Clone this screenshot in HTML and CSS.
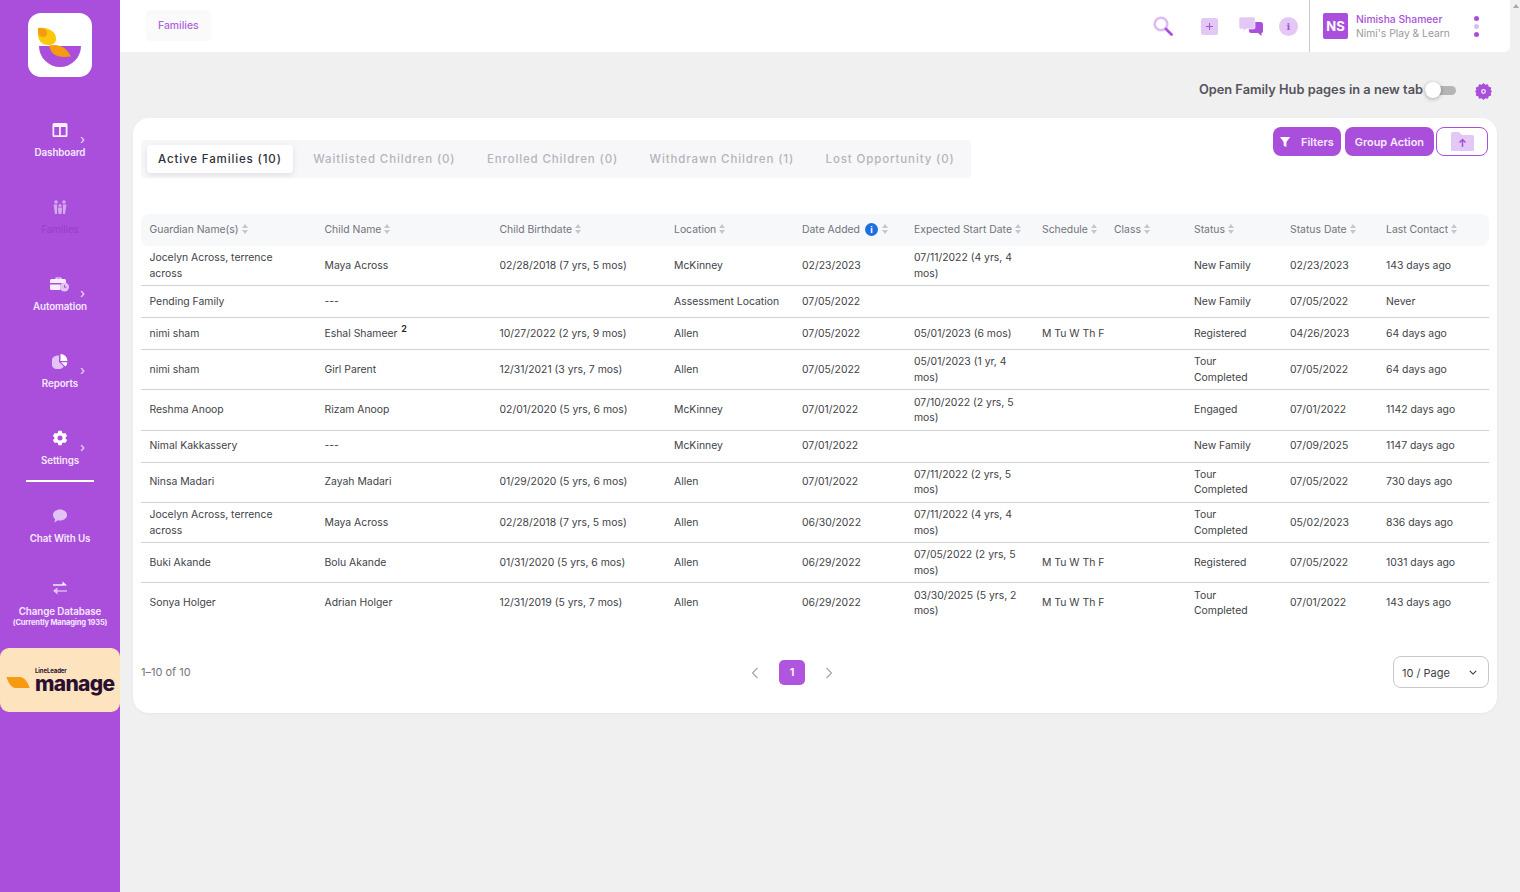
FILE: index.html
```html
<!DOCTYPE html>
<html lang="en">
<head>
<meta charset="utf-8">
<title>Families</title>
<link rel="stylesheet" href="styles.css">
</head>
<body>
<div class="app">
<aside class="sidebar">
  <div class="logo">
    <svg viewBox="0 0 64 64" width="64" height="64"><path d="M11 33h42a21 21 0 0 1-42 0z" fill="#a94fdc"/><path d="M10 15c10-1 18 3 18 11 0 4-3 6-8 6-6 0-9-4-10-9z" fill="#fdc80a"/><path d="M10 15c5-.5 9 1 9 5 0 3-2 4-4 4-3 0-4-2-5-5z" fill="#f59a11"/><path d="M21 32.500c6-1.500 13 0 17 4 2 2 4 5 5 7-8 1-14 .5-18-3-2-2-3-5-4-8z" fill="#f59a11"/></svg>
  </div>
  <nav class="nav">
    <a class="item"><svg class="ic" viewBox="0 0 16 16" width="16" height="16"><path fill="#fff" d="M2 1h12a1.500 1.500 0 0 1 1.500 1.500v11a1.500 1.500 0 0 1-1.500 1.500H2a1.500 1.500 0 0 1-1.500-1.500v-11A1.500 1.500 0 0 1 2 1zm.2 4v8.300h4.900V5zm6.600 0v8.300h4.900V5z" fill-rule="evenodd" opacity=".92"/></svg><span class="lb">Dashboard</span><i class="chev">›</i></a>
    <a class="item item-current"><svg class="ic" viewBox="0 0 16 16" width="16" height="16"><g fill="#e5c6f5" opacity=".75"><circle cx="4" cy="3" r="1.800"/><circle cx="12" cy="3" r="1.800"/><circle cx="8" cy="6.500" r="1.500"/><path d="M1.500 5.500h3.700L5 15H3zM10.800 5.500h3.700L13 15h-2zM6 8.500h4v3l-.6 3.500H6.600L6 11.500z"/></g></svg><span class="lb">Families</span></a>
    <a class="item"><svg class="ic ic-w" viewBox="0 0 20 16" width="20" height="16"><path fill="#fff" opacity=".9" d="M5.500 3V1.500h6V3h3a1.500 1.500 0 0 1 1.500 1.500V7H0V4.500A1.500 1.500 0 0 1 1.500 3zm1.200 0h3.600v-.4H6.700zM0 8.500h10.500v5.500H1.500A1.500 1.500 0 0 1 0 12.500z"/><circle cx="14.500" cy="11" r="4.500" fill="#e3c3f5"/><path d="M14.500 9v2.300h1.800" stroke="#a94fdc" fill="none"/></svg><span class="lb">Automation</span><i class="chev">›</i></a>
    <a class="item"><svg class="ic" viewBox="0 0 16 16" width="16" height="16"><path fill="#e3c3f5" d="M7 2.500V9l4.800 4.500A7 7 0 1 1 7 2.500z"/><path fill="#fff" d="M8.500 1a7 7 0 0 1 7 7h-7z"/><path fill="#fff" d="M9 9.200h6.400a7 7 0 0 1-2 4.300z"/></svg><span class="lb">Reports</span><i class="chev">›</i></a>
    <a class="item item-active"><svg class="ic" viewBox="0 0 16 16" width="16" height="16"><path fill="#fff" fill-rule="evenodd" d="M6.300 .8h3.400l.4 2 1.300.8 2-.7 1.700 3-1.500 1.300v1.600l1.500 1.300-1.700 3-2-.7-1.300.8-.4 2H6.300l-.4-2-1.300-.8-2 .7-1.700-3 1.500-1.300V7.200L.9 5.900l1.700-3 2 .7 1.300-.8zM8 5.500a2.500 2.500 0 1 0 0 5 2.500 2.500 0 0 0 0-5z"/></svg><span class="lb">Settings</span><i class="chev">›</i></a>
    <a class="item item-short"><svg class="ic" viewBox="0 0 16 16" width="16" height="16"><path fill="#e3c3f5" d="M8 1.500c4 0 7 2.400 7 5.500s-3 5.500-7 5.500c-.8 0-1.500-.1-2.200-.3L2.500 14.500l.6-3.500C1.800 10 1 8.600 1 7c0-3.100 3-5.500 7-5.500z"/></svg><span class="lb">Chat With Us</span></a>
    <a class="item item-db"><svg class="ic" viewBox="0 0 16 16" width="16" height="16"><path fill="none" stroke="#fff" stroke-width="1.300" d="M1 5h10"/><path fill="#fff" d="M10.500 1.500 15 5.500h-4.500z"/><path fill="none" stroke="#e3c3f5" stroke-width="1.300" d="M15 11H5"/><path fill="#e3c3f5" d="M5.500 7.500 1 10.700h4.500zM1 10.700l4.500 3.800v-3.800z"/></svg><span class="lb">Change Database</span><span class="lb-sub">(Currently Managing 1935)</span></a>
  </nav>
  <div class="manage">
    <svg viewBox="0 0 26 14" width="25" height="13"><path d="M0 1h14c5 0 9 5 11 12H11C5 13 2 7 0 1z" fill="#f59a11"/></svg>
    <div class="manage-text"><span class="manage-top">LineLeader</span><span class="manage-word">manage</span></div>
  </div>
</aside>
<main class="main">
  <header class="topbar">
    <div class="crumb">Families</div>
    <div class="top-icons">
      <svg class="t-search" viewBox="0 0 20 20" width="20" height="20"><circle cx="8" cy="8" r="6.300" fill="none" stroke="#dcbcf2" stroke-width="2.600"/><path d="M13 13l5.500 5.500" stroke="#a94fdc" stroke-width="2.800" stroke-linecap="round"/></svg>
      <svg class="t-plus" viewBox="0 0 17 17" width="17" height="17"><rect width="17" height="17" rx="2.500" fill="#e3c8f6"/><path d="M8.500 5v7M5 8.500h7" stroke="#a94fdc" stroke-width="1"/></svg>
      <svg class="t-chat" viewBox="0 0 24 19" width="24" height="19"><path d="M9 5h12.500A2.500 2.500 0 0 1 24 7.500V14a2 2 0 0 1-1.500 2v3L19 16h-7a2 2 0 0 1-2-2z" fill="#a94fdc"/><path d="M1.500 0h13A1.500 1.500 0 0 1 16 1.500v9a1.500 1.500 0 0 1-1.500 1.500H7l-2.500 2.500V12h-3A1.500 1.500 0 0 1 0 10.500v-9A1.500 1.500 0 0 1 1.500 0z" fill="#e3c8f6" stroke="#fff" stroke-width=".6"/></svg>
      <div class="t-info">i</div>
    </div>
    <div class="user">
      <div class="avatar">NS</div>
      <div class="user-text"><div class="u-name">Nimisha Shameer</div><div class="u-org">Nimi's Play &amp; Learn</div></div>
      <div class="dots"><i></i><i class="dot-l"></i><i></i></div>
    </div>
  </header>
  <div class="toggle-row">
    <span class="toggle-label">Open Family Hub pages in a new tab</span>
    <span class="toggle"><i></i></span>
    <svg class="gear" viewBox="0 0 16 16" width="17" height="17"><path fill="#a94fdc" fill-rule="evenodd" d="M8 0l1.800 1.700 2.400-.5.800 2.300 2.300.8-.5 2.400L16 8l-1.200 1.300.5 2.400-2.300.8-.8 2.300-2.400-.5L8 16l-1.800-1.700-2.400.5-.8-2.300-2.300-.8.5-2.400L0 8l1.200-1.300-.5-2.400 2.300-.8.8-2.300 2.400.5zm0 5.700a2.300 2.300 0 1 0 0 4.600 2.300 2.300 0 0 0 0-4.600zm0 1.200a1.100 1.100 0 1 1 0 2.200 1.100 1.100 0 0 1 0-2.200z"/></svg>
  </div>
  <section class="card">
    <div class="card-top">
      <div class="tabs">
        <div class="tab tab-on">Active Families (10)</div>
        <div class="tab">Waitlisted Children (0)</div>
        <div class="tab">Enrolled Children (0)</div>
        <div class="tab">Withdrawn Children (1)</div>
        <div class="tab">Lost Opportunity (0)</div>
      </div>
      <div class="actions">
        <button class="btn btn-filter"><svg viewBox="0 0 12 12" width="11" height="12"><path fill="#fff" d="M0 .5h11L7 6v5.500L4 10V6z"/></svg>Filters</button>
        <button class="btn">Group Action</button>
        <button class="btn-out"><svg viewBox="0 0 23 19" width="23" height="19"><path fill="#e3c8f6" d="M0 1.500A1.500 1.500 0 0 1 1.500 0H8l3 3h10.500A1.500 1.500 0 0 1 23 4.500v13a1.500 1.500 0 0 1-1.500 1.500h-20A1.500 1.500 0 0 1 0 17.500z"/><path d="M11.500 15V8M8.500 10.500l3-3 3 3" stroke="#a94fdc" stroke-width="1.500" fill="none"/></svg></button>
      </div>
    </div>
    <table class="tbl">
      <colgroup><col class="c1"><col class="c1"><col class="c1"><col class="c4"><col class="c5"><col class="c4"><col class="c7"><col class="c8"><col class="c9"><col class="c9"><col class="c11"></colgroup>
      <thead><tr>
        <th>Guardian Name(s)<span class="sort"></span></th>
        <th>Child Name<span class="sort"></span></th>
        <th>Child Birthdate<span class="sort"></span></th>
        <th>Location<span class="sort"></span></th>
        <th>Date Added<span class="info-b">i</span><span class="sort"></span></th>
        <th>Expected Start Date<span class="sort"></span></th>
        <th>Schedule<span class="sort"></span></th>
        <th>Class<span class="sort"></span></th>
        <th>Status<span class="sort"></span></th>
        <th>Status Date<span class="sort"></span></th>
        <th>Last Contact<span class="sort"></span></th>
      </tr></thead>
      <tbody>
        <tr class="h40"><td class="gn">Jocelyn Across, terrence across</td><td>Maya Across</td><td>02/28/2018 (7 yrs, 5 mos)</td><td>McKinney</td><td>02/23/2023</td><td>07/11/2022 (4 yrs, 4 mos)</td><td></td><td></td><td>New Family</td><td>02/23/2023</td><td>143 days ago</td></tr>
        <tr class="h32"><td>Pending Family</td><td>---</td><td></td><td>Assessment Location</td><td>07/05/2022</td><td></td><td></td><td></td><td>New Family</td><td>07/05/2022</td><td>Never</td></tr>
        <tr class="h32"><td>nimi sham</td><td>Eshal Shameer <sup class="cnt">2</sup></td><td>10/27/2022 (2 yrs, 9 mos)</td><td>Allen</td><td>07/05/2022</td><td>05/01/2023 (6 mos)</td><td class="nw">M Tu W Th F</td><td></td><td>Registered</td><td>04/26/2023</td><td>64 days ago</td></tr>
        <tr class="h40"><td>nimi sham</td><td>Girl Parent</td><td>12/31/2021 (3 yrs, 7 mos)</td><td>Allen</td><td>07/05/2022</td><td>05/01/2023 (1 yr, 4 mos)</td><td></td><td></td><td class="st">Tour Completed</td><td>07/05/2022</td><td>64 days ago</td></tr>
        <tr class="h41"><td>Reshma Anoop</td><td>Rizam Anoop</td><td>02/01/2020 (5 yrs, 6 mos)</td><td>McKinney</td><td>07/01/2022</td><td>07/10/2022 (2 yrs, 5 mos)</td><td></td><td></td><td>Engaged</td><td>07/01/2022</td><td>1142 days ago</td></tr>
        <tr class="h32 up"><td>Nimal Kakkassery</td><td>---</td><td></td><td>McKinney</td><td>07/01/2022</td><td></td><td></td><td></td><td>New Family</td><td>07/09/2025</td><td>1147 days ago</td></tr>
        <tr class="h40 up"><td>Ninsa Madari</td><td>Zayah Madari</td><td>01/29/2020 (5 yrs, 6 mos)</td><td>Allen</td><td>07/01/2022</td><td>07/11/2022 (2 yrs, 5 mos)</td><td></td><td></td><td class="st">Tour Completed</td><td>07/05/2022</td><td>730 days ago</td></tr>
        <tr class="h40"><td class="gn">Jocelyn Across, terrence across</td><td>Maya Across</td><td>02/28/2018 (7 yrs, 5 mos)</td><td>Allen</td><td>06/30/2022</td><td>07/11/2022 (4 yrs, 4 mos)</td><td></td><td></td><td class="st">Tour Completed</td><td>05/02/2023</td><td>836 days ago</td></tr>
        <tr class="h40"><td>Buki Akande</td><td>Bolu Akande</td><td>01/31/2020 (5 yrs, 6 mos)</td><td>Allen</td><td>06/29/2022</td><td>07/05/2022 (2 yrs, 5 mos)</td><td class="nw">M Tu W Th F</td><td></td><td>Registered</td><td>07/05/2022</td><td>1031 days ago</td></tr>
        <tr class="h40 last"><td>Sonya Holger</td><td>Adrian Holger</td><td>12/31/2019 (5 yrs, 7 mos)</td><td>Allen</td><td>06/29/2022</td><td>03/30/2025 (5 yrs, 2 mos)</td><td class="nw">M Tu W Th F</td><td></td><td class="st">Tour Completed</td><td>07/01/2022</td><td>143 days ago</td></tr>
      </tbody>
    </table>
    <div class="pager-row">
      <div class="range">1–10 of 10</div>
      <div class="pager">
        <svg viewBox="0 0 8 12" width="8" height="12"><path d="M6.500 1 1.500 6l5 5" fill="none" stroke="#a5a5ad" stroke-width="1.200"/></svg>
        <span class="pg-cur">1</span>
        <svg viewBox="0 0 8 12" width="8" height="12"><path d="M1.500 1l5 5-5 5" fill="none" stroke="#a5a5ad" stroke-width="1.200"/></svg>
      </div>
      <div class="page-size"><span>10 / Page</span><svg viewBox="0 0 10 6" width="8" height="5"><path d="M1 1l4 4 4-4" fill="none" stroke="#333" stroke-width="1.300"/></svg></div>
    </div>
  </section>
</main>
<div class="scrollbar"><i></i></div>
</div>
</body>
</html>
```
FILE: styles.css
```css
* { box-sizing: border-box; }
html, body { margin: 0; height: 100%; }
body { font-family: Inter, "Liberation Sans", sans-serif; background: #f0f0f0; color: #3a3a44; overflow: hidden; }
.app { display: flex; height: 892px; width: 1520px; }

.sidebar { width: 120px; flex: none; background: #a94fdc; display: flex; flex-direction: column; align-items: stretch; padding-top: 13px; }
.logo { width: 64px; height: 64px; margin: 0 auto; background: #fff; border-radius: 13px; }
.logo svg { display: block; }
.nav { display: flex; flex-direction: column; margin-top: 38px; }
.item { position: relative; height: 77px; display: flex; flex-direction: column; align-items: center; padding-top: 7px; color: #f6e8fd; font-size: 9.800px; font-weight: 600; }
.ic { display: block; flex: none; }
.lb { margin-top: 8px; line-height: 14px; white-space: nowrap; letter-spacing: -.1px; }
.item-current .lb { color: #9a3fcb; font-weight: 500; }
.item-active { height: 59px; }
.item-active::after { content: ""; position: absolute; left: 26px; right: 26px; bottom: 0; height: 2px; background: #fff; }
.item-short { height: 73px; padding-top: 26px; }
.item-db { height: 93px; padding-top: 25px; }
.item-db .lb { margin-top: 9px; }
.lb-sub { font-size: 7.500px; line-height: 8px; font-weight: 700; white-space: nowrap; letter-spacing: -.15px; }
.chev { position: absolute; left: 80px; top: 17px; font-style: normal; font-size: 13px; line-height: 14px; font-weight: 400; color: #f3dffb; }
.manage { height: 64px; background: #fee3bf; border-radius: 9px; display: flex; align-items: center; padding-left: 6px; gap: 4px; }
.manage svg { margin-top: 4px; }
.manage-text { display: flex; flex-direction: column; color: #2a1030; margin-top: 1px; }
.manage-top { font-size: 6px; font-weight: 700; line-height: 6px; letter-spacing: -.1px; }
.manage-word { font-size: 21px; line-height: 19px; font-weight: 800; letter-spacing: -.7px; }

.main { width: 1390px; flex: none; display: flex; flex-direction: column; }
.topbar { height: 52px; background: #fff; border-bottom-right-radius: 6px; display: flex; align-items: center; padding-left: 26px; }
.crumb { height: 31px; padding: 0 12px; background: #fafafa; border-radius: 4px; color: #ad63dd; font-size: 10.400px; font-weight: 500; line-height: 31px; margin-top: -1px; }
.top-icons { margin-left: auto; display: flex; align-items: center; }
.t-search { margin-right: 28px; }
.t-plus { margin-right: 21px; }
.t-chat { margin-right: 16px; }
.t-info { width: 19px; height: 19px; border-radius: 50%; background: #e3c8f6; color: #a94fdc; font-family: "DejaVu Serif", serif; font-weight: 700; font-size: 10px; line-height: 19px; text-align: center; }
.user { margin-left: 11px; height: 52px; width: 201px; border-left: 1px solid #c8c8c8; display: flex; align-items: center; padding-left: 13px; }
.avatar { width: 25px; height: 26px; border-radius: 2px; background: #a94fdc; color: #fff; font-weight: 700; font-size: 13px; line-height: 26px; text-align: center; }
.user-text { margin-left: 8px; font-size: 10.300px; line-height: 14px; }
.u-name { color: #a94fdc; font-weight: 500; }
.u-org { color: #9a9a9a; }
.dots { margin-left: 24px; display: flex; flex-direction: column; gap: 3px; }
.dots i { width: 5px; height: 5px; border-radius: 50%; background: #a94fdc; }
.dots .dot-l { background: #dcbcf2; }

.toggle-row { height: 66px; display: flex; align-items: center; justify-content: flex-end; padding-right: 18px; padding-top: 9px; }
.toggle-label { font-size: 12.800px; font-weight: 600; color: #54545c; }
.toggle { position: relative; width: 31px; height: 9px; margin-left: 2px; margin-top: 1px; background: #b5b5b5; border-radius: 5px; }
.toggle i { position: absolute; left: 0; top: -4px; width: 16px; height: 16px; border-radius: 50%; background: #fff; box-shadow: 0 1px 4px rgba(0,0,0,.3); }
.gear { margin-left: 19px; margin-top: 4px; }

.card { width: 1364px; height: 595px; margin-left: 13px; background: #fff; border-radius: 16px; padding: 9px 8px 0; box-shadow: 0 1px 3px rgba(0,0,0,.04); }
.card-top { height: 87px; display: flex; justify-content: space-between; align-items: flex-start; }
.tabs { margin-top: 13px; height: 38px; width: 830px; background: #f7f7f9; border-radius: 4px; display: flex; padding: 5px 6px; }
.tab { height: 28px; padding: 0 11px; margin-right: 9.500px; font-size: 11.500px; font-weight: 500; letter-spacing: .87px; line-height: 28px; color: #b4b4bc; white-space: nowrap; }
.tab:last-child { margin-right: 0; }
.tab-on { background: #fff; color: #2f2f3a; border-radius: 4px; box-shadow: 0 2px 6px rgba(0,0,0,.1); }
.actions { display: flex; align-items: center; gap: 4px; margin-right: 1px; }
.btn { height: 29px; border: 0; border-radius: 8px; background: #a94fdc; color: #f7ebfd; font: 600 10.900px Inter, sans-serif; padding: 0 10px; display: flex; align-items: center; gap: 10px; }
.btn-filter { padding: 0 7px 0 7px; }
.btn-out { height: 29px; width: 52px; margin-left: -2px; background: #fff; border: 1px solid #a94fdc; border-radius: 8px; padding: 0; display: flex; align-items: center; justify-content: center; }

.tbl { width: 1348px; table-layout: fixed; border-collapse: separate; border-spacing: 0; font-size: 10.400px; color: #3f3f48; }
.c1 { width: 175px; } .c4 { width: 128px; } .c5 { width: 112px; } .c7 { width: 72px; } .c8 { width: 80px; } .c9 { width: 96px; } .c11 { width: 111px; }
th { height: 32px; background: #f7f8fa; text-align: left; font-weight: 400; color: #73737c; padding: 0 8px 1px; white-space: nowrap; }
th:first-child { border-radius: 8px 0 0 8px; }
th:last-child { border-radius: 0 8px 8px 0; }
td { padding: 0 8px; line-height: 15.500px; border-bottom: 1px solid #d2d2d2; vertical-align: middle; }
th:nth-child(-n+3), td:nth-child(-n+3) { padding-left: 8.500px; }
.last td { border-bottom: 0; }
.h40 td { height: 40px; } .h32 td { height: 32px; } .h41 td { height: 41px; }
.up td { padding-bottom: 2px; line-height: 15px; }
.nw { white-space: nowrap; }
.st { padding-right: 20px; }
.gn { padding-right: 32px; }
.sort { display: inline-block; position: relative; width: 7px; height: 10px; margin-left: 3px; vertical-align: -1px; }
.sort::before, .sort::after { content: ""; position: absolute; left: 0; border: 3.500px solid transparent; }
.sort::before { top: -3px; border-bottom: 4px solid #c6c6cc; }
.sort::after { bottom: -3px; border-top: 4px solid #c6c6cc; }
.info-b { display: inline-block; width: 13px; height: 13px; margin: 0 1px 0 5px; border-radius: 50%; background: #1f6fe0; color: #fff; font-size: 9px; font-weight: 700; line-height: 13px; text-align: center; }
.cnt { font-size: 9px; font-weight: 600; color: #222; line-height: 0; margin-left: 1px; }

.pager-row { position: relative; display: flex; align-items: center; height: 32px; margin-top: 33px; }
.range { font-size: 11px; color: #73737c; }
.pager { position: absolute; left: 610px; top: 4px; display: flex; align-items: center; gap: 20px; }
.pg-cur { width: 26px; height: 25px; border-radius: 5px; background: #b055e0; color: #fff; font-size: 11px; font-weight: 600; text-align: center; line-height: 25px; }
.page-size { margin-left: auto; width: 96px; height: 32px; border: 1px solid #c8c8c8; border-radius: 8px; display: flex; align-items: center; justify-content: space-between; padding: 1px 11px 0 8px; font-size: 11px; color: #3f3f48; }

.scrollbar { width: 10px; position: relative; background: #f0f0f0; }
.scrollbar i { position: absolute; left: 3px; top: 4px; border: 3px solid transparent; border-bottom: 4px solid #a8a8a8; border-top: 0; }
```
